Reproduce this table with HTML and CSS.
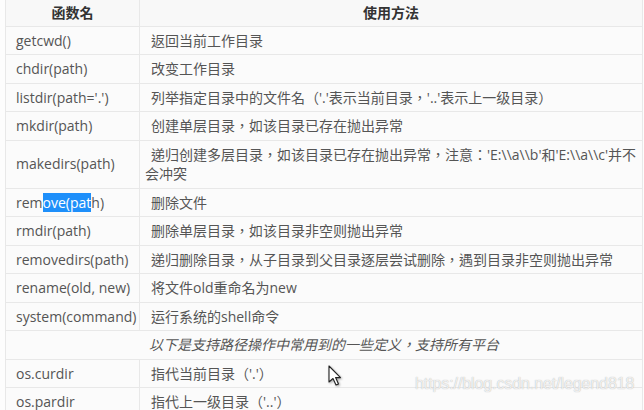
FILE: index.html
```html
<!DOCTYPE html>
<html lang="zh-TW">
<head>
<meta charset="utf-8">
<title>os 模块</title>
<link rel="stylesheet" href="styles.css">
</head>
<body>
<div class="page">
<table class="fn-table">
  <colgroup><col class="c1"><col class="c2"></colgroup>
  <thead>
    <tr><th>函数名</th><th>使用方法</th></tr>
  </thead>
  <tbody>
    <tr><td class="name">getcwd()</td><td class="desc">返回当前工作目录</td></tr>
    <tr><td class="name">chdir(path)</td><td class="desc">改变工作目录</td></tr>
    <tr><td class="name">listdir(path='.')</td><td class="desc">列举指定目录中的文件名（'.'表示当前目录，'..'表示上一级目录）</td></tr>
    <tr><td class="name">mkdir(path)</td><td class="desc">创建单层目录，如该目录已存在抛出异常</td></tr>
    <tr><td class="name">makedirs(path)</td><td class="desc">递归创建多层目录，如该目录已存在抛出异常，注意：'E:\\a\\b'和'E:\\a\\c'并不会冲突</td></tr>
    <tr><td class="name">rem<span class="sel">ove(pat</span>h)</td><td class="desc">删除文件</td></tr>
    <tr><td class="name">rmdir(path)</td><td class="desc">删除单层目录，如该目录非空则抛出异常</td></tr>
    <tr><td class="name">removedirs(path)</td><td class="desc">递归删除目录，从子目录到父目录逐层尝试删除，遇到目录非空则抛出异常</td></tr>
    <tr><td class="name">rename(old, new)</td><td class="desc">将文件old重命名为new</td></tr>
    <tr><td class="name">system(command)</td><td class="desc">运行系统的shell命令</td></tr>
    <tr><td class="note" colspan="2">以下是支持路径操作中常用到的一些定义，支持所有平台</td></tr>
    <tr><td class="name">os.curdir</td><td class="desc">指代当前目录（'.'）</td></tr>
    <tr><td class="name">os.pardir</td><td class="desc">指代上一级目录（'..'）</td></tr>
  </tbody>
</table>
<div class="watermark">https://blog.csdn.net/legend818</div>
<svg class="cursor" width="14" height="22" viewBox="0 0 14 22"><path d="M1 1 L1 17 L5 13.5 L8 20 L10.5 19 L7.6 12.6 L12.5 12.6 Z" fill="#fff" stroke="#222" stroke-width="1.1" stroke-linejoin="round"/></svg>
</div>
</body>
</html>
```
FILE: styles.css
```css
html, body {
  margin: 0;
  padding: 0;
  background: #fdfdfd;
}
.page {
  position: relative;
  width: 644px;
  height: 410px;
  overflow: hidden;
  padding: 0 0 0 5px;
  box-sizing: border-box;
}
.fn-table {
  margin-top: -2px;
  width: 638px;
  border-collapse: collapse;
  table-layout: fixed;
  font-family: "Open Sans", "Noto Sans CJK TC", sans-serif;
  font-size: 14px;
  line-height: 19.5px;
  color: #555;
  background: #fbfbfb;
}
.c1 { width: 134px; }
.fn-table th, .fn-table td {
  border: 1px solid #e8e8e8;
  padding: 4px 0;
  vertical-align: middle;
}
.fn-table th {
  font-weight: bold;
  color: #333;
  text-align: center;
  background: #f8f8f8;
  padding: 4px 0 3px;
}
.name {
  padding-left: 10px !important;
  white-space: nowrap;
}
.desc {
  padding-left: 5px !important;
  padding-right: 4px !important;
  text-indent: 6px;
}
.note {
  text-align: center;
  font-style: italic;
}
.sel {
  background: #1e8ffa;
  color: #fff;
}
.watermark {
  position: absolute;
  left: 415px;
  top: 375px;
  font-family: "Liberation Sans", Arial, sans-serif;
  font-size: 16px;
  color: rgba(255, 255, 255, 0.8);
  text-shadow: 0 0 1px rgba(110, 110, 110, 0.6);
  letter-spacing: -0.1px;
}
.cursor {
  position: absolute;
  left: 328px;
  top: 365px;
  filter: drop-shadow(1px 1px 1px rgba(0,0,0,0.35));
}
```
